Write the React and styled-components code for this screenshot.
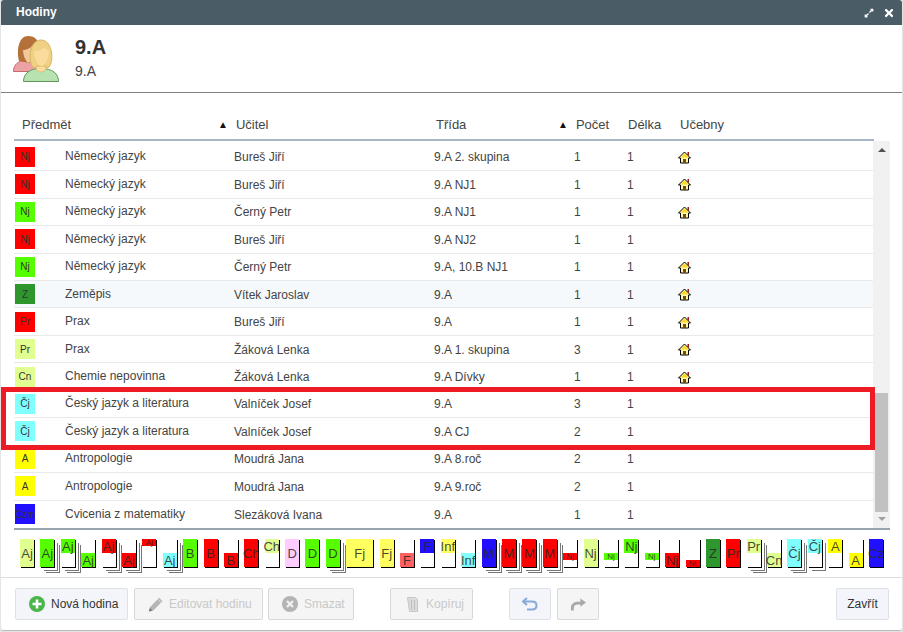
import React from 'react';
import styled, { createGlobalStyle } from 'styled-components';
import { FaExpandAlt, FaTimes } from 'react-icons/fa';

const GlobalStyle = createGlobalStyle`
html, body { margin: 0; padding: 0; background: #e4e4e4; }
body { font-family: "Liberation Sans", Arial, sans-serif; }
`;

const LIME = '#e0ff90';
const GREEN = '#55ff00';
const RED = '#ff0000';
const CYAN = '#80ffff';
const YELLOW = '#ffff00';
const BLUE = '#2010ff';
const LEMON = '#ffff60';

const rows = [
  { code: 'Nj', color: RED, subject: 'Německý jazyk', teacher: 'Bureš Jiří', group: '9.A 2. skupina', count: 1, room: true },
  { code: 'Nj', color: RED, subject: 'Německý jazyk', teacher: 'Bureš Jiří', group: '9.A NJ1', count: 1, room: true },
  { code: 'Nj', color: GREEN, subject: 'Německý jazyk', teacher: 'Černý Petr', group: '9.A NJ1', count: 1, room: true },
  { code: 'Nj', color: RED, subject: 'Německý jazyk', teacher: 'Bureš Jiří', group: '9.A NJ2', count: 1 },
  { code: 'Nj', color: GREEN, subject: 'Německý jazyk', teacher: 'Černý Petr', group: '9.A, 10.B NJ1', count: 1, room: true },
  { code: 'Z', color: '#2d962d', subject: 'Zeměpis', teacher: 'Vítek Jaroslav', group: '9.A', count: 1, room: true, hover: true },
  { code: 'Pr', color: RED, subject: 'Prax', teacher: 'Bureš Jiří', group: '9.A', count: 1, room: true },
  { code: 'Pr', color: LIME, subject: 'Prax', teacher: 'Žáková Lenka', group: '9.A 1. skupina', count: 3, room: true },
  { code: 'Cn', color: LIME, subject: 'Chemie nepovinna', teacher: 'Žáková Lenka', group: '9.A Dívky', count: 1, room: true },
  { code: 'Čj', color: CYAN, subject: 'Český jazyk a literatura', teacher: 'Valníček Josef', group: '9.A', count: 3 },
  { code: 'Čj', color: CYAN, subject: 'Český jazyk a literatura', teacher: 'Valníček Josef', group: '9.A CJ', count: 2 },
  { code: 'A', color: YELLOW, subject: 'Antropologie', teacher: 'Moudrá Jana', group: '9.A 8.roč', count: 2 },
  { code: 'A', color: YELLOW, subject: 'Antropologie', teacher: 'Moudrá Jana', group: '9.A 9.roč', count: 2 },
  { code: 'Czm', color: BLUE, subject: 'Cvicenia z matematiky', teacher: 'Slezáková Ivana', group: '9.A', count: 1 },
];

const cards = [
  { t: 'Aj', c: LIME, p: 'full' },
  { t: 'Aj', c: GREEN, p: 'full', stack: true },
  { t: 'Aj', c: GREEN, p: 'top', stack: true },
  { t: 'Aj', c: GREEN, p: 'bottom' },
  { t: 'Aj', c: RED, p: 'top', stack: true },
  { t: 'Aj', c: RED, p: 'bottom', stack: true },
  { t: 'Aj', c: RED, p: 'cap' },
  { t: 'Aj', c: CYAN, p: 'bottom', stack: true },
  { t: 'B', c: GREEN, p: 'full' },
  { t: 'B', c: RED, p: 'full' },
  { t: 'B', c: RED, p: 'bottom' },
  { t: 'Ch', c: RED, p: 'full' },
  { t: 'Ch', c: LIME, p: 'top' },
  { t: 'D', c: '#ffccff', p: 'full' },
  { t: 'D', c: GREEN, p: 'full' },
  { t: 'D', c: GREEN, p: 'full', stack: true },
  { t: 'Fj', c: LEMON, p: 'full', wide: true },
  { t: 'Fj', c: LEMON, p: 'full' },
  { t: 'F', c: '#ff6060', p: 'bottom' },
  { t: 'F', c: BLUE, p: 'top' },
  { t: 'Inf', c: LEMON, p: 'top' },
  { t: 'Inf', c: CYAN, p: 'bottom' },
  { t: 'M', c: BLUE, p: 'full', stack: true },
  { t: 'M', c: RED, p: 'full', stack: true },
  { t: 'M', c: RED, p: 'full', stack: true },
  { t: 'M', c: RED, p: 'full', stack: true },
  { t: 'Nj', c: RED, p: 'mid' },
  { t: 'Nj', c: LIME, p: 'full' },
  { t: 'Nj', c: GREEN, p: 'mid' },
  { t: 'Nj', c: GREEN, p: 'top' },
  { t: 'Nj', c: GREEN, p: 'mid' },
  { t: 'Nj', c: RED, p: 'bottom' },
  { t: 'Nj', c: RED, p: 'low' },
  { t: 'Z', c: '#2d962d', p: 'full' },
  { t: 'Pr', c: RED, p: 'full' },
  { t: 'Pr', c: LIME, p: 'top', stack: true },
  { t: 'Cn', c: LIME, p: 'bottom' },
  { t: 'Čj', c: CYAN, p: 'full', stack: true },
  { t: 'Čj', c: CYAN, p: 'top', single: true },
  { t: 'A', c: YELLOW, p: 'top' },
  { t: 'A', c: YELLOW, p: 'bottom' },
  { t: 'Cz', c: BLUE, p: 'full' },
];

const fills = {
  full: 'top: 0; bottom: 0;',
  top: 'top: 0; height: 14px;',
  bottom: 'bottom: 0; height: 14px;',
  cap: 'top: 0; height: 7px;',
  mid: 'top: 14px; height: 7px;',
  low: 'bottom: 0; height: 7px;',
};

function PeopleIcon() {
  return (
    <svg width="46" height="46" viewBox="0 0 46 46">
      <path d="M.5 35.500c0-7 5-11 12-11s12 4 12 11z" fill="#eba3a6" stroke="#c9686e" />
      <path d="M6 25C3 14 6 0 15 0c6 0 10 3 10 9v14l-9 4z" fill="#b5713a" />
      <path d="M10 14c3 0 8-2 10-5v15l-5 3c-3-3-5-8-5-13z" fill="#f2c99a" />
      <path d="M10.500 45.500c0-8 6-13 17.500-13s17.500 5 17.500 13z" fill="#b8e2b0" stroke="#5f9a5a" />
      <path d="M23 28h10v5c-2 4-8 4-10 0z" fill="#fbdc9d" stroke="#e0b86c" strokeWidth=".8" />
      <path d="M20 31C15 26 16 4 28 4c12 0 13 22 8 27-1 1-3 1-4-1H24c-1 2-3 2-4 1z" fill="#f0d184" stroke="#d8b463" />
      <path d="M21 15c3 0 8-1 10-4 1 2 3 3 5 4 0 7-4 15-7.500 15S21 22 21 15z" fill="#fbdc9d" />
    </svg>
  );
}

function HouseIcon() {
  return (
    <svg width="13" height="13" viewBox="0 0 13 13">
      <path d="M9.500 1H11v4L9.500 4z" fill="#a01818" />
      <path d="M6.500 1 .5 7h2v5h8V7h2z" fill="#fff6b0" stroke="#000" strokeWidth="1" />
      <path d="M6.500 2.500 2.500 6.500h8z" fill="#ffd820" />
      <rect x="5" y="8" width="3" height="4" fill="#7a4a00" />
    </svg>
  );
}

function PlusIcon() {
  return (
    <svg width="16" height="16" viewBox="0 0 16 16">
      <circle cx="8" cy="8" r="8" fill="#4cb54c" />
      <path d="M8 3.500v9M3.500 8h9" stroke="#fff" strokeWidth="2.600" />
    </svg>
  );
}

function PencilIcon() {
  return (
    <svg width="16" height="17" viewBox="0 0 18 18">
      <path d="M1 17l1.200-5L12.500 1.500l3.800 3.800L6 15.800z" fill="#b5b5b5" />
      <path d="M11 3l4 4" stroke="#e6e6e6" strokeWidth="1" />
      <path d="M1 17l1.200-4 2.800 2.800z" fill="#777" />
    </svg>
  );
}

function RemoveIcon() {
  return (
    <svg width="16" height="16" viewBox="0 0 16 16">
      <circle cx="8" cy="8" r="8" fill="#b4b4b4" />
      <path d="M5 5l6 6M11 5l-6 6" stroke="#f2f2f2" strokeWidth="2.200" />
    </svg>
  );
}

function CopyIcon() {
  return (
    <svg width="11" height="15" viewBox="0 0 11 15">
      <path d="M.5.5h8l2 2v12h-8z" fill="#dcdcdc" stroke="#c8c8c8" />
      <path d="M4.500 3v10M7.500 3v10" stroke="#bdbdbd" />
    </svg>
  );
}

function UndoIcon() {
  return (
    <svg width="16" height="14" viewBox="0 0 16 14">
      <path d="M5 1 1 4.500 5 8" fill="none" stroke="#8aa9d8" strokeWidth="2" />
      <path d="M2 4.500h8c3 0 4.500 1.500 4.500 4s-1.500 4-4.500 4H5" fill="none" stroke="#8aa9d8" strokeWidth="2" />
    </svg>
  );
}

function RedoIcon() {
  return (
    <svg width="16" height="13" viewBox="0 0 17 13">
      <path d="M11 0l6 4.500L11 9V6.500H8C5.500 6.500 4 8 4 10.500V13H1v-3c0-4 3-6.500 7-6.500h3z" fill="#a8a8a8" />
    </svg>
  );
}

export default function App() {
  return (
    <Page>
      <GlobalStyle />
      <Win>
        <TitleBar>
          <Title>Hodiny</Title>
          <TitleIcons>
            <FaExpandAlt size={10} />
            <FaTimes size={12} />
          </TitleIcons>
        </TitleBar>
        <Head>
          <PeopleIcon />
          <HeadText>
            <HeadName>9.A</HeadName>
            <HeadSub>9.A</HeadSub>
          </HeadText>
        </Head>
        <Content>
          <HeaderRow>
            <HeadCell $w={204} $pl={8}>Předmět</HeadCell>
            <SortCell $w={218}><Arrow>▲</Arrow>Učitel</SortCell>
            <HeadCell $w={122}>Třída</HeadCell>
            <SortCell $w={70}><Arrow>▲</Arrow>Počet</SortCell>
            <HeadCell $w={52}>Délka</HeadCell>
            <HeadCell $w={100}>Učebny</HeadCell>
          </HeaderRow>
          <Middle>
            <Rows>
              {rows.map((r, i) => (
                <Row key={i} $hover={r.hover}>
                  <SwatchCell>
                    <Swatch $color={r.color}>{r.code}</Swatch>
                  </SwatchCell>
                  <Cell $w={169}>{r.subject}</Cell>
                  <Cell $w={200} $low>{r.teacher}</Cell>
                  <Cell $w={140} $low>{r.group}</Cell>
                  <Cell $w={53} $low>{r.count}</Cell>
                  <Cell $w={51} $low>1</Cell>
                  <Cell $w={60} $low>{r.room && <HouseIcon />}</Cell>
                </Row>
              ))}
            </Rows>
            <Scrollbar>
              <ArrowUp />
              <Track><Thumb /></Track>
              <ArrowDown />
            </Scrollbar>
          </Middle>
          <Highlight />
        </Content>
        <Strip>
          {cards.map((c, i) => (
            <Card key={i} $wide={c.wide} $stack={c.stack} $single={c.single}>
              <Fill $part={c.p} $color={c.c}>
                <CardLabel $part={c.p}>{c.t}</CardLabel>
              </Fill>
            </Card>
          ))}
        </Strip>
        <Footer>
          <Button $w={113}><PlusIcon />Nová hodina</Button>
          <Button $w={129} $gap={5} disabled><PencilIcon />Editovat hodinu</Button>
          <Button $w={86} $mx={-1} disabled><RemoveIcon />Smazat</Button>
          <Button $w={83} $mx={30} $pl={16} $gap={8} disabled><CopyIcon />Kopíruj</Button>
          <IconButton $w={42} $mx={30}><UndoIcon /></IconButton>
          <IconButton $w={42} disabled><RedoIcon /></IconButton>
          <CloseButton $w={53}>Zavřít</CloseButton>
        </Footer>
      </Win>
    </Page>
  );
}

const Page = styled.div`
width: 903px;
height: 632px;
padding: 0 1px 1px 1px;
box-sizing: border-box;
overflow: hidden;`;

const Win = styled.div`
height: 631px;
background-color: #fff;
display: flex;
flex-direction: column;
border-radius: 3px;
overflow: hidden;
border-bottom: 1px solid #bbb;
box-sizing: border-box;`;

const TitleBar = styled.div`
height: 25px;
flex: none;
background-color: #4a5c66;
display: flex;
align-items: center;
justify-content: space-between;
padding: 0 7px 0 15px;`;

const Title = styled.div`
color: #fff;
font-size: 12px;
font-weight: 700;
margin-top: -2px;`;

const TitleIcons = styled.div`
display: flex;
align-items: center;
gap: 9px;
color: #fff;`;

const Head = styled.div`
height: 68px;
flex: none;
box-sizing: border-box;
border-bottom: 1px solid #808080;
display: flex;
align-items: flex-start;
padding: 11px 0 0 12px;
gap: 16px;`;

const HeadText = styled.div`
display: flex;
flex-direction: column;
color: #333;`;

const HeadName = styled.div`
font-size: 20px;
font-weight: 700;
line-height: 22px;`;

const HeadSub = styled.div`
font-size: 14px;
line-height: 18px;
margin-top: 4px;
color: #444;`;

const Content = styled.div`
position: relative;
flex: none;
height: 435px;
padding-left: 13px;`;

const HeaderRow = styled.div`
height: 48px;
width: 860px;
box-sizing: border-box;
border-bottom: 2px solid #a8b6c8;
display: flex;
align-items: flex-end;
padding-bottom: 7px;
font-size: 13px;
color: #444;`;

const HeadCell = styled.div`
width: ${p => p.$w}px;
padding-left: ${p => p.$pl || 0}px;
box-sizing: border-box;
flex: none;
line-height: 15px;`;

const SortCell = styled.div`
width: ${p => p.$w}px;
flex: none;
line-height: 15px;`;

const Arrow = styled.span`
font-size: 10px;
line-height: 0;
color: #111;
margin-right: 8px;
vertical-align: 1px;`;

const Middle = styled.div`
display: flex;
height: 387px;`;

const Rows = styled.div`
width: 859px;
padding-top: 2.700px;
flex: none;`;

const Row = styled.div`
height: 27.46px;
box-sizing: border-box;
border-bottom: 1px solid #e9e9e9;
background-color: ${p => (p.$hover ? '#f5f9fc' : '#fff')};
display: flex;
align-items: center;
font-size: 12px;
color: #444;
&:last-child { border-bottom: none; }`;

const SwatchCell = styled.div`
width: 51px;
flex: none;
padding-left: 1px;
box-sizing: border-box;`;

const Swatch = styled.div`
width: 20px;
height: 20px;
background-color: ${p => p.$color};
color: #333;
font-size: 10px;
display: flex;
align-items: center;
justify-content: center;
white-space: nowrap;`;

const Cell = styled.div`
width: ${p => p.$w}px;
flex: none;
display: flex;
align-items: center;
margin-top: ${p => (p.$low ? '1px' : '-1px')};`;

const Scrollbar = styled.div`
width: 17px;
flex: none;
background-color: #f1f1f1;
display: flex;
flex-direction: column;
align-items: center;`;

const ArrowUp = styled.div`
width: 0;
height: 0;
flex: none;
margin-top: 7px;
border-left: 4px solid transparent;
border-right: 4px solid transparent;
border-bottom: 4px solid #505050;`;

const Track = styled.div`
flex: 1;
width: 13px;
display: flex;
flex-direction: column;
justify-content: flex-end;`;

const Thumb = styled.div`
height: 119px;
background-color: #c1c1c1;
margin-bottom: 5px;`;

const ArrowDown = styled.div`
width: 0;
height: 0;
flex: none;
margin-bottom: 7px;
border-left: 4px solid transparent;
border-right: 4px solid transparent;
border-top: 4px solid #a0a0a0;`;

const Highlight = styled.div`
position: absolute;
left: 0;
top: 294px;
width: 874px;
height: 63px;
box-sizing: border-box;
border: 5px solid #ed1c24;
pointer-events: none;`;

const Strip = styled.div`
height: 49px;
flex: none;
box-sizing: border-box;
border-top: 2px solid #98a4b0;
margin: 0 0 0 13px;
width: 876px;
display: flex;
gap: 6.400px;
padding: 9px 0 0 6px;`;

const Card = styled.div`
position: relative;
flex: none;
width: ${p => (p.$wide ? '27px' : '14px')};
height: 28px;
background-color: #fff;
box-shadow: ${p => {
    if (p.$stack) return '1px 1px 0 #000, 3px 3px 0 #fff, 4px 4px 0 #777, 5px 5px 0 #fff, 6px 6px 0 #777';
    if (p.$single) return '1px 1px 0 #000, 3px 3px 0 #fff, 4px 4px 0 #777';
    return '1px 1px 0 #000';
  }};`;

const Fill = styled.div`
position: absolute;
left: 0;
right: 0;
${p => fills[p.$part]}
background-color: ${p => p.$color};
display: flex;
align-items: center;
justify-content: center;`;

const CardLabel = styled.span`
font-size: ${p => (['cap', 'mid', 'low'].includes(p.$part) ? '8px' : '13px')};
color: rgba(40, 40, 40, 0.85);
white-space: nowrap;`;

const Footer = styled.div`
flex: 1;
display: flex;
align-items: flex-start;
border-top: 1px solid #ddd;
padding: 10px 13px 0 14px;
gap: 6px;`;

const Button = styled.button`
width: ${p => p.$w}px;
height: 32px;
flex: none;
box-sizing: border-box;
display: flex;
align-items: center;
gap: ${p => p.$gap || 6}px;
padding: 0 0 0 ${p => p.$pl || 13}px;
margin-left: ${p => p.$mx || 0}px;
font-family: "Liberation Sans", Arial, sans-serif;
font-size: 12px;
border-radius: 2px;
border: 1px solid ${p => (p.disabled ? '#d8d8d8' : '#dde1e8')};
background-color: ${p => (p.disabled ? '#f5f5f5' : '#f3f5fa')};
color: ${p => (p.disabled ? '#c8c8c8' : '#333')};`;

const IconButton = styled(Button)`
justify-content: center;
padding: 0;`;

const CloseButton = styled(Button)`
margin-left: auto;
justify-content: center;
padding: 0;
color: #333;`;
